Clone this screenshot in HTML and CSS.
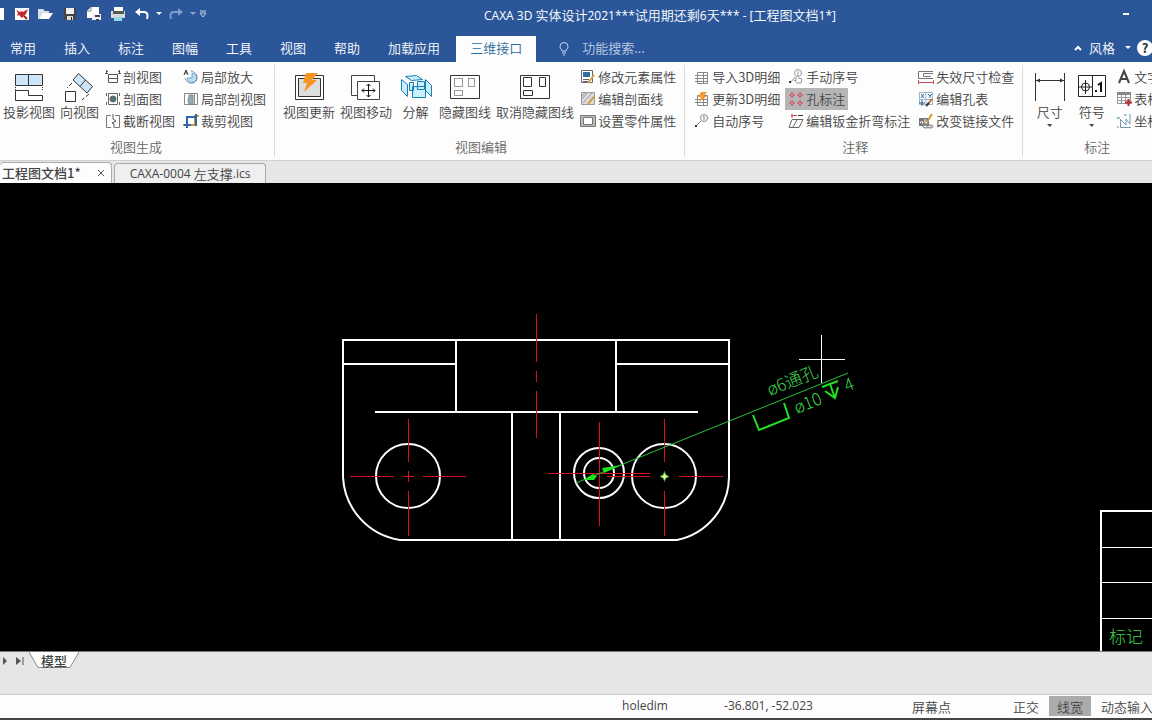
FILE: index.html
```html
<!DOCTYPE html>
<html lang="zh-CN">
<head>
<meta charset="utf-8">
<title>CAXA 3D 实体设计2021</title>
<link rel="stylesheet" href="styles.css">
</head>
<body>
<div class="app">
  <header class="titlebar">
    <div class="quick">
      <button class="qbtn" aria-label="新建"><svg width="18" height="16" viewBox="0 0 18 16"><path d="M0 2h10v12H0z" fill="#fff"/></svg></button>
      <button class="qbtn" aria-label="三维设计"><svg width="18" height="16" viewBox="0 0 18 16"><path d="M2 2h14v12H2z" fill="#fff"/><path d="M3 4l4 2 2-1 1 1 5-3-2 5-4 4-3-3-2 1 1-3z" fill="#c52828"/><path d="M11 10l3 3" stroke="#a82020" stroke-width="2"/></svg></button>
      <button class="qbtn" aria-label="打开"><svg width="18" height="16" viewBox="0 0 18 16"><path d="M1 3h5l2 2h4v2H5l-3 6H1z" fill="#d8dde6"/><path d="M5 7h11l-4 6H2z" fill="#fff"/></svg></button>
      <button class="qbtn" aria-label="保存"><svg width="18" height="16" viewBox="0 0 18 16"><path d="M3 2h12v12H3z" fill="#444"/><path d="M5 2h8v6H5z" fill="#eee"/><path d="M6 10h6v4H6z" fill="#ddd"/><path d="M10 11h1v3h-1z" fill="#222"/></svg></button>
      <button class="qbtn" aria-label="另存为"><svg width="18" height="16" viewBox="0 0 18 16"><path d="M6 1h8v11H2V5z" fill="#fff"/><path d="M6 1v4H2" fill="none" stroke="#888"/><path d="M7 8h9v6H7z" fill="#eef"/><path d="M10 9h5v2h-5zM11 13h3v2h-3z" fill="#444"/></svg></button>
      <button class="qbtn" aria-label="打印"><svg width="18" height="16" viewBox="0 0 18 16"><path d="M5 1h9v4H5z" fill="#fff"/><path d="M2 5h14v7H2z" fill="#d8d8d8"/><path d="M4 5h11v3H4z" fill="#555"/><path d="M5 11h8v4H5z" fill="#8ed8ee"/></svg></button>
      <button class="qbtn" aria-label="撤销"><svg width="18" height="16" viewBox="0 0 18 16"><path d="M7 2v8L2 6z" fill="#fff"/><path d="M6 6h5c4 0 4 4 3 7" fill="none" stroke="#fff" stroke-width="2"/></svg></button>
      <button class="qdrop" aria-label="撤销列表"><svg width="6" height="4"><path d="M0 0h6L3 3z" fill="#fff"/></svg></button>
      <button class="qbtn" aria-label="重做"><svg width="18" height="16" viewBox="0 0 18 16"><path d="M11 2v8l5-4z" fill="#7f9dd0"/><path d="M12 6H7c-4 0-4 4-3 7" fill="none" stroke="#7f9dd0" stroke-width="2"/></svg></button>
      <button class="qdrop" aria-label="重做列表"><svg width="6" height="4"><path d="M0 0h6L3 3z" fill="#8fa8d4"/></svg></button>
      <button class="qdrop" aria-label="自定义"><svg width="6" height="8"><path d="M0 1h6" stroke="#c5d0e6"/><path d="M0 3h6L3 7z" fill="none" stroke="#c5d0e6"/></svg></button>
    </div>
    <h1 class="title"><span class="latin">CAXA 3D </span>实体设计<span class="latin">2021***</span>试用期还剩<span class="latin">6</span>天<span class="latin">*** - [</span>工程图文档<span class="latin">1*]</span></h1>
    <button class="min" aria-label="最小化"><svg width="6" height="2"><path d="M0 0h6v2H0z" fill="#fff"/></svg></button>
  </header>

  <nav class="menu">
    <button class="tab first">常用</button>
    <button class="tab">插入</button>
    <button class="tab">标注</button>
    <button class="tab">图幅</button>
    <button class="tab">工具</button>
    <button class="tab">视图</button>
    <button class="tab">帮助</button>
    <button class="tab">加载应用</button>
    <button class="tab active">三维接口</button>
    <label class="search">
      <svg width="10" height="14" viewBox="0 0 10 14" fill="none" stroke="#c9d5ec"><path d="M3 9C3 7 1 7 1 4.500a4 4 0 0 1 8 0C9 7 7 7 7 9zM3 11h4M4 13h2"/></svg>
      <input type="text" placeholder="功能搜索..." aria-label="功能搜索">
    </label>
    <div class="menu-right">
      <button class="style"><svg width="8" height="6"><path d="M1 5l3-3 3 3" fill="none" stroke="#fff" stroke-width="2"/></svg><span>风格</span><svg class="style-arrow" width="6" height="4"><path d="M0 0h6L3 3z" fill="#fff"/></svg></button>
      <button class="help" aria-label="帮助">?</button>
    </div>
  </nav>

  <section class="ribbon">
    <div class="group">
      <div class="items">
        <button class="big"><svg width="32" height="30" viewBox="0 0 32 30" fill="none" stroke="#333"><path d="M2.500 1.500h27v11h-27zM15.500 1.500v11" fill="#cfe6f8"/><path d="M2.500 14v4M29.500 14v4" stroke-dasharray="1 1"/><path d="M2.500 17.500h13v5h14v5h-27z" fill="#fff"/></svg>投影视图</button>
        <button class="big"><svg width="32" height="30" viewBox="0 0 32 30" fill="none" stroke="#333"><path d="M14.500 .5l14 13-5.500 6.500-14-13z" fill="#cfe6f8"/><path d="M21.500 7l-5.500 6.500"/><path d="M8 10l-5 5M25 21l-7 6" stroke-dasharray="4 2"/><path d="M1.500 18.500h10v10h-10z" fill="#fff"/></svg>向视图</button>
        <div class="cols">
          <div class="col">
            <button class="small"><svg width="16" height="16" viewBox="0 0 16 16" fill="none" stroke="#555"><path d="M3.500 5.500h9v8h-9zM1.500 4V1M14.500 4V1M1 2.500h2M13 2.500h2M3.500 9.500h9M0 4.500h3M13 4.500h3"/></svg>剖视图</button>
            <button class="small"><svg width="16" height="16" viewBox="0 0 16 16" fill="none" stroke="#666"><path d="M3.500 2.500h9v11h-9zM1.500 2v3M14.500 2v3M1.500 11v3M14.500 11v3"/><circle cx="8" cy="8" r="3" fill="#4b7184"/></svg>剖面图</button>
            <button class="small"><svg width="16" height="16" viewBox="0 0 16 16" fill="none" stroke="#777"><path d="M6 2.500H1.500v12H6M10 2.500h4.500v12H10"/><path d="M8 1v5l3 2-4 2 2 1v4" stroke="#555"/></svg>截断视图</button>
          </div>
          <div class="col">
            <button class="small"><svg width="16" height="16" viewBox="0 0 16 16" fill="none" stroke="#777"><path d="M9 4v5H4a5 5 0 1 0 5-5z" fill="#b8dcf4" stroke="#6ba3c8"/><path d="M1 6l2-5 2 5M2 4h2" stroke="#333"/><path d="M8 2a6 6 0 1 1-6 7" stroke-dasharray="2 1"/></svg>局部放大</button>
            <button class="small"><svg width="16" height="16" viewBox="0 0 16 16" fill="none" stroke="#888"><path d="M1.500 2.500h13v11h-13z"/><path d="M6 4h4v9H6c-2-3 0-6 0-9z" fill="#8fa9b8"/><path d="M11.500 2v12"/></svg>局部剖视图</button>
            <button class="small"><svg width="16" height="16" viewBox="0 0 16 16" fill="none" stroke-width="2"><path d="M0 12h12V3h4" stroke="#d79333"/><path d="M4 15V4h9v9" stroke="#2c67b1"/><path d="M13 4V1M1 12h7" stroke="#2c67b1"/></svg>裁剪视图</button>
          </div>
        </div>
      </div>
      <div class="caption">视图生成</div>
    </div>

    <div class="group pad">
      <div class="items">
        <button class="big"><svg width="32" height="30" viewBox="0 0 32 30" fill="none" stroke="#333"><path d="M2.500 2.500h28v24h-28z" fill="#fff"/><path d="M5.500 5.500h22v18h-22z" fill="#ddd"/><path d="M13 0h12l-6 7h5L11 19l3-9h-4z" fill="#f7931e" stroke="none"/></svg>视图更新</button>
        <button class="big"><svg width="32" height="30" viewBox="0 0 32 30" fill="none" stroke="#444"><path d="M1.500 2.500h23v20h-23z" fill="#fff"/><path d="M7.500 8.500h22v18h-22z" fill="#fff"/><path d="M12 17.500h13M18.500 11v13M14 15.500l-2 2 2 2M23 15.500l2 2-2 2M16.500 13l2-2 2 2M16.500 22l2 2 2-2" stroke="#111"/></svg>视图移动</button>
        <button class="big"><svg width="32" height="30" viewBox="0 0 32 30" fill="#c9efff" stroke="#1680b5"><path d="M5.500 3.500l11-1 6 4-11 1zM1.500 6.500l6 5v12l-6-6zM9.500 9.500h4v8h-4zM17.500 8.500h7v8h-7zM25.500 6.500l6 6v11l-6-6zM12.500 13.500h13v11h-13z"/></svg>分解</button>
        <button class="big"><svg width="32" height="30" viewBox="0 0 32 30" fill="none" stroke="#333"><path d="M1.500 2.500h29v23h-29z" fill="#fff"/><path d="M5.500 5.500h8v8h-8zM19.500 5.500h6v8h-6zM5.500 17.500h8v5h-8z" stroke-dasharray="1 1"/></svg>隐藏图线</button>
        <button class="big"><svg width="32" height="30" viewBox="0 0 32 30" fill="none" stroke="#333"><path d="M1.500 2.500h29v23h-29z" fill="#fff"/><path d="M4.500 4.500h8v9h-8zM20.500 4.500h6v9h-6zM4.500 17.500h9v5h-9z"/></svg>取消隐藏图线</button>
        <div class="cols">
          <div class="col">
            <button class="small"><svg width="16" height="16" viewBox="0 0 16 16" fill="none" stroke="#666"><path d="M1.500 1.500h11v12h-11z" fill="#fff"/><path d="M3 3h7v5H3z" fill="#2f6ea4" stroke="none"/><path d="M3 10.500h6M3 12.500h5"/><path d="M14 6l-6 8" stroke="#d9a24a" stroke-width="2"/></svg>修改元素属性</button>
            <button class="small"><svg width="16" height="16" viewBox="0 0 16 16" fill="none" stroke="#999"><path d="M1.500 1.500h13v12h-13z" fill="#ddd"/><path d="M2 8l5-6M3 12l9-10M8 12l6-7M2 5l3-3"/><path d="M14 6l-6 7" stroke="#d9a24a" stroke-width="2"/></svg>编辑剖面线</button>
            <button class="small"><svg width="16" height="16" viewBox="0 0 16 16" fill="none" stroke="#777"><path d="M.5 2.500h15v11H.5z" fill="#bbb"/><path d="M3.500 4.500h9v7h-9z" fill="#fff"/></svg>设置零件属性</button>
          </div>
        </div>
      </div>
      <div class="caption">视图编辑</div>
    </div>

    <div class="group pad">
      <div class="items">
        <div class="cols">
          <div class="col">
            <button class="small"><svg width="16" height="16" viewBox="0 0 16 16" fill="none" stroke="#888"><path d="M3.500 3.500h10v11h-10zM1 6.500h13M1 9.500h13M1 12.500h13M9.500 3v11"/></svg>导入3D明细</button>
            <button class="small"><svg width="16" height="16" viewBox="0 0 16 16" fill="none" stroke="#888"><path d="M3.500 4.500h10v10h-10zM1 8.500h13M1 11.500h13M9.500 5v9"/><path d="M7 1h6l-3 4h3l-8 6 2-5H4z" fill="#f49a2c" stroke="none"/></svg>更新3D明细</button>
            <button class="small"><svg width="16" height="16" viewBox="0 0 16 16" fill="none" stroke="#888"><circle cx="10" cy="5" r="3.500"/><path d="M9 4l1-1v4M7 8l-5 5"/><path d="M1 12h2v2H1z" fill="#333" stroke="none"/></svg>自动序号</button>
          </div>
          <div class="col">
            <button class="small"><svg width="16" height="16" viewBox="0 0 16 16" fill="none" stroke="#999"><circle cx="10" cy="4" r="3.500"/><path d="M10 2v5M7 8l-4 5M8 8v4l-2-1 3 3h4l1-4-4-1"/><path d="M1 12h2v2H1z" fill="#333" stroke="none"/></svg>手动序号</button>
            <button class="small pressed"><svg width="16" height="16" viewBox="0 0 16 16" fill="none" stroke="#d4505c"><circle cx="4" cy="4" r="1.500"/><circle cx="12" cy="4" r="1.500"/><circle cx="4" cy="12" r="1.500"/><circle cx="12" cy="12" r="1.500"/><path d="M1 4h2M5 4h2M4 1v2M4 5v2M9 4h2M13 4h2M12 1v2M12 5v2M1 12h2M5 12h2M4 9v2M4 13v2M9 12h2M13 12h2M12 9v2M12 13v2"/></svg>孔标注</button>
            <button class="small"><svg width="16" height="16" viewBox="0 0 16 16" fill="none" stroke="#666"><path d="M4 6.500h11l-4 8H1zM9 7l-4 7"/><path d="M3 2.500h6M4 1v4" stroke="#d0444f"/><path d="M10 2.500h5" stroke="#333"/></svg>编辑钣金折弯标注</button>
          </div>
          <div class="col">
            <button class="small"><svg width="16" height="16" viewBox="0 0 16 16" fill="none" stroke="#777"><path d="M15 9.500H.5v-7H15M15 4.500H5.500v3H12v-1"/><path d="M1 13.500h14M.5 11v4M15.500 11v4" stroke="#c84e5e"/></svg>失效尺寸检查</button>
            <button class="small"><svg width="16" height="16" viewBox="0 0 16 16" fill="none" stroke="#9db6cb"><path d="M1.500 1.500h13v12h-13zM8 1v13M1 8.500h14"/><path d="M3 3l3 4M6 3L3 7M10 3l2 2 2-2M12 5v2" stroke="#23699d"/><path d="M4 9v6M1 12h6" stroke="#245b89"/><path d="M14 8l-4 5" stroke="#b97626" stroke-width="2"/><path d="M8 15l3-3" stroke="#333" stroke-width="2"/></svg>编辑孔表</button>
            <button class="small"><svg width="16" height="16" viewBox="0 0 16 16" fill="none" stroke="#777"><path d="M1 5h10v8H1z" fill="#777" stroke="none"/><path d="M2 10l2-2 1 3M7 6v4h2V8" stroke="#fff"/><path d="M14 1L9 9" stroke="#d59b38" stroke-width="2"/><ellipse cx="8" cy="13.500" rx="3" ry="1.500" fill="#eee"/><ellipse cx="12" cy="13.500" rx="3" ry="1.500" fill="#ddd"/></svg>改变链接文件</button>
          </div>
        </div>
      </div>
      <div class="caption">注释</div>
    </div>

    <div class="group last pad">
      <div class="items">
        <button class="big"><svg width="32" height="30" viewBox="0 0 32 30" fill="none" stroke="#333"><path d="M1.500 0v28M30.500 0v28M2 7.500h28"/><path d="M2 7.500l4-2v4zM30 7.500l-4-2v4z" fill="#333" stroke="none"/></svg>尺寸<svg class="drop" width="6" height="4"><path d="M0 0h5L3 3z" fill="#444"/></svg></button>
        <button class="big"><svg width="32" height="30" viewBox="0 0 32 30" fill="none" stroke="#222"><path d="M2.500 2.500h27v21h-27zM16.500 2.500v21" fill="#fff"/><circle cx="9.500" cy="14" r="4"/><path d="M3 14h13M9.500 7v14"/><path d="M19 17h2v2h-2z" fill="#111" stroke="none"/><path d="M22 12l3-2v9" stroke="#111" stroke-width="2"/></svg>符号<svg class="drop" width="6" height="4"><path d="M0 0h5L3 3z" fill="#444"/></svg></button>
        <div class="cols">
          <div class="col">
            <button class="small"><svg width="16" height="16" viewBox="0 0 16 16" fill="none" stroke="#454545" stroke-width="2"><path d="M3 14L8 2l5 12M5 10h6"/></svg>文字</button>
            <button class="small"><svg width="16" height="16" viewBox="0 0 16 16" fill="none" stroke="#999"><path d="M1.500 1.500h13v11h-13zM1 6.500h14M1 9.500h14M5.500 4v9M9.500 4v9"/><path d="M1 1h14v3H1z" fill="#888" stroke="none"/><path d="M12.500 8v7M9 11.500h7" stroke="#b62b3a" stroke-width="2"/></svg>表格</button>
            <button class="small"><svg width="16" height="16" viewBox="0 0 16 16" fill="none" stroke="#7299b4"><path d="M4.500 6v8.500H15M5 7l5 5V6l4 5V3"/><path d="M1 4l1 2M4 4L2 6M8 2h3M13 2h2M1 14h2" stroke="#599"/></svg>坐标</button>
          </div>
        </div>
      </div>
      <div class="caption">标注</div>
    </div>
  </section>

  <nav class="docs">
    <button class="doc current">工程图文档1*<svg width="8" height="8"><path d="M1 1l6 6M7 1L1 7" stroke="#555"/></svg></button>
    <button class="doc other"><span class="latin">CAXA-0004 </span>左支撑<span class="latin">.ics</span></button>
  </nav>

  <main class="canvas">
    <svg class="drawing" viewBox="0 183 1152 468" preserveAspectRatio="xMinYMin slice" fill="none">
      <g stroke="#fff" stroke-width="2">
        <path d="M343 477V340H729V477A65 65 0 0 1 677 540H400A67 67 0 0 1 343 477M343 364H456M616 364H729M456 340V412M616 340V412M375 412H698M512 412V540M560 412V540"/>
        <circle cx="408" cy="476" r="32"/>
        <circle cx="664" cy="476" r="32"/>
        <circle cx="599" cy="473" r="25"/>
        <circle cx="599" cy="473" r="15"/>
      </g>
      <g stroke="#d41425">
        <path d="M536.500 314V362M536.500 371V382M536.500 391V438"/>
        <path d="M350 476.500H394M403 476.500H414M423 476.500H466M408.500 419V462M408.500 471V482M408.500 491V536"/>
        <path d="M599.500 422V526"/>
        <path d="M548 473.500H650"/>
        <path d="M607 476.500H650M660 476.500H669M679 476.500H723M664.500 419V462M664.500 471V482M664.500 491V536"/>
      </g>
      <path stroke="#29c13a" d="M576 483L848 373"/>
      <path fill="#20e020" d="M583 480l10-6 4 2-3 4zM602 468l2 5 18-8z"/>
      <path fill="#f3efa0" stroke="#29a13a" d="M660 476.500l3-1.500 1.500-3 1.500 3 3 1.500-3 1.500-1.500 3-1.500-3z"/>
      <path stroke="#20e020" stroke-width="2" d="M753 415L759 430L789 418L784 403M822 387L838 381"/>
      <path stroke="#20e020" stroke-width="2" d="M830 384L835 398M825 391L835 398L838 387"/>
      <g class="cad-text">
        <text x="770" y="396" transform="rotate(-22 770 396)">ø6通孔</text>
        <text x="797" y="414" transform="rotate(-22 797 414)">ø10</text>
        <text x="847" y="392" transform="rotate(-22 847 392)">4</text>
        <text x="1109" y="643">标记</text>
      </g>
      <path stroke="#fff" d="M821.500 335V383M799 359.500H845M1101 547.500H1152M1101 582.500H1152M1101 618.500H1152"/>
      <path stroke="#fff" stroke-width="2" d="M1101 651V511H1152"/>
    </svg>
  </main>

  <div class="sheets">
    <button class="step" aria-label="下一页"><svg width="6" height="8"><path d="M1 0l4 4-4 4z" fill="#555"/></svg></button>
    <button class="step" aria-label="最后一页"><svg width="8" height="8"><path d="M0 0l5 4-5 4z" fill="#555"/><path d="M7 0v8" stroke="#555"/></svg></button>
    <button class="sheet"><svg class="sheet-shape" width="50" height="17" viewBox="0 0 50 17"><path d="M0 0L9 15.500H41L50 0" fill="#fff" stroke="#888"/></svg><span>模型</span></button>
  </div>

  <footer class="status">
    <span class="command latin">holedim</span>
    <output class="coords latin">-36.801, -52.023</output>
    <button class="snap">屏幕点</button>
    <button class="toggle">正交</button>
    <button class="toggle on">线宽</button>
    <button class="toggle">动态输入</button>
  </footer>
  <div class="edge"></div>
</div>
</body>
</html>
```

FILE: styles.css
```css
* { box-sizing: border-box; }
body { margin: 0; overflow: hidden; }
body, button, input {
  font-family: "Noto Sans CJK SC", "Open Sans", sans-serif;
  font-size: 13px;
  font-weight: 350;
  line-height: 18px;
}
button {
  margin: 0;
  padding: 0;
  border: 0;
  background: none;
  color: inherit;
  white-space: nowrap;
}
svg { display: block; flex: none; }
.latin { font-family: "Open Sans", sans-serif; font-size: 12px; font-weight: 400; white-space: pre; }
.app { display: flex; flex-direction: column; height: 100vh; color: #444; background: #e6e6e6; }

.titlebar { display: flex; align-items: center; height: 36px; padding: 0 23px 8px 0; background: #2b579a; color: #fff; flex: none; }
.quick { display: flex; align-items: center; gap: 6px; margin-left: -6px; flex: none; }
.quick .qbtn:first-child { margin-right: -5px; }
.qdrop { width: 6px; margin: 0 -1px; }
.title { flex: 1; margin: 3px 0 0; padding-right: 8px; font-size: 13px; font-weight: 350; text-align: center; white-space: nowrap; }
.min { flex: none; }

.menu { display: flex; align-items: stretch; height: 26px; background: #2b579a; color: #fff; flex: none; }
.tab { padding: 0 14px 2px; }
.tab.first { padding-left: 10px; }
.tab.active { margin: 0 23px 0 2px; background: #fdfdfd; color: #2b6a9a; }
.search { display: flex; align-items: center; gap: 13px; }
.search input { width: 120px; padding: 0 0 2px; border: 0; outline: 0; background: none; color: #fff; }
.search input::placeholder { color: #c0cde4; opacity: 1; }
.menu-right { display: flex; align-items: center; gap: 6px; margin-left: auto; margin-right: -1px; padding-bottom: 2px; }
.style { display: flex; align-items: center; gap: 7px; }
.style-arrow { margin-left: 3px; }
.help { width: 16px; height: 16px; border-radius: 50%; background: #fff; color: #234; font-weight: 700; line-height: 16px; }

.ribbon { display: flex; padding: 3px 0; height: 99px; background: #fdfdfd; border-bottom: 1px solid #d0d0d0; overflow: hidden; flex: none; }
.group { display: flex; flex-direction: column; justify-content: space-between; flex: none; padding: 0 5px 0 3px; border-right: 1px solid #dcdcdc; }
.group.pad { padding-left: 8px; }
.group.last { padding-right: 24px; border-right: 0; }
.items { display: flex; gap: 5px; }
.big { display: flex; flex-direction: column; align-items: center; min-width: 37px; padding-top: 8px; }
.drop { margin-top: 3px; }
.cols { display: flex; gap: 2px; margin-left: -2px; }
.col { display: flex; flex-direction: column; align-items: flex-start; padding-top: 1px; }
.small { display: flex; align-items: center; gap: 2px; height: 22px; padding: 0 3px; }
.pressed { background: #b5b5b5; }
.caption { text-align: center; line-height: 20px; color: #666; }

.docs { display: flex; align-items: flex-end; gap: 2px; height: 22px; flex: none; }
.doc { display: flex; align-items: center; height: 20px; border: 1px solid #aaa; border-bottom: 0; border-radius: 4px 4px 0 0; }
.current { gap: 16px; height: 21px; padding: 0 6px 0 2px; border-left: 0; background: #fdfdfd; font-weight: 500; }
.other { padding: 0 15px; background: #efefef; }

.canvas { flex: 1; min-height: 0; background: #000; overflow: hidden; }
.drawing { width: 100%; height: 100%; }
.cad-text { fill: #3fd64c; font-family: "Noto Sans CJK SC", sans-serif; font-size: 17px; font-weight: 300; }

.sheets { display: flex; align-items: flex-start; gap: 8px; height: 43px; padding: 0 2px; border-top: 1px solid #777; flex: none; }
.step { padding-top: 5px; }
.sheet { position: relative; width: 50px; height: 17px; margin-left: -3px; line-height: 12px; font-weight: 500; }
.sheet-shape { position: absolute; inset: 0; }
.sheet span { position: relative; }

.status { display: flex; align-items: stretch; height: 24px; padding: 1px 0 2px 54%; border-top: 1px solid #c8c8c8; background: #fdfdfd; overflow: hidden; flex: none; }
.status > * { flex: none; line-height: 19px; text-align: left; }
.command { width: 102px; }
.coords { width: 188px; }
.snap { width: 93px; }
.toggle { margin-right: 2px; padding: 0 8px; }
.on { background: #ababab; }
.edge { height: 2px; background: #444; flex: none; }
```
